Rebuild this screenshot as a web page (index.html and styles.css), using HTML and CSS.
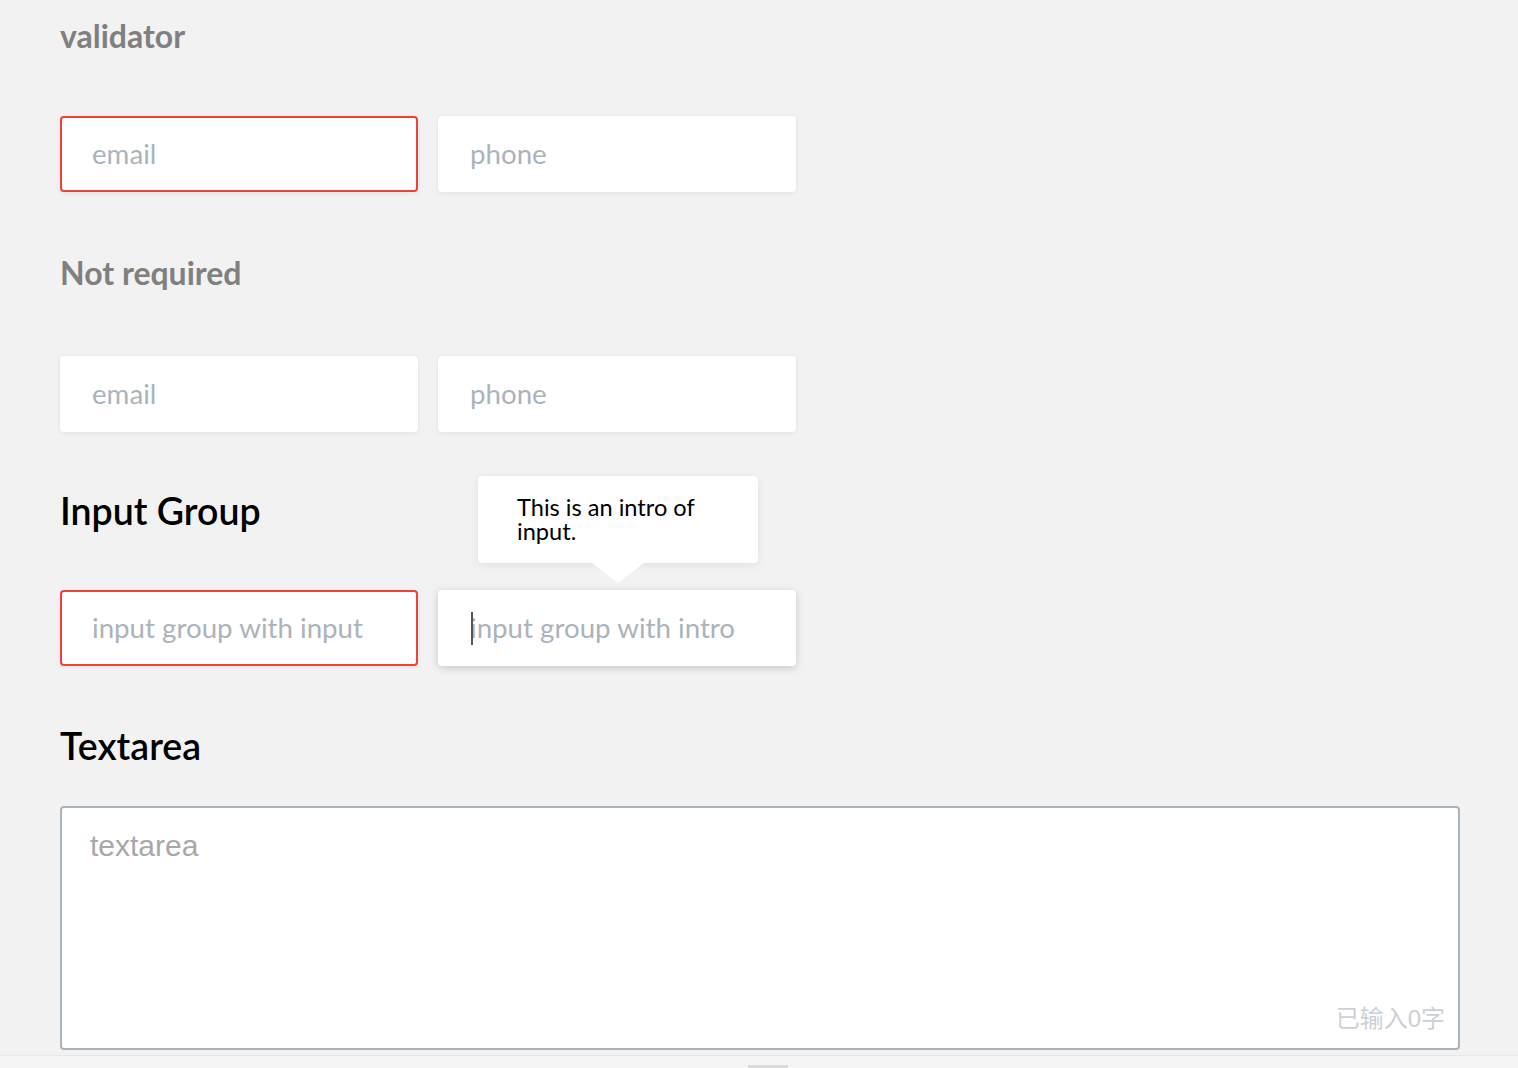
FILE: index.html
```html
<!DOCTYPE html>
<html>
<head>
<meta charset="utf-8">
<link rel="stylesheet" href="styles.css">
</head>
<body>
<main class="page">
  <h3 class="sub-title first">validator</h3>
  <div class="input-row">
    <div class="field invalid"><input class="text-input" placeholder="email"></div>
    <div class="field"><input class="text-input" placeholder="phone"></div>
  </div>

  <h3 class="sub-title second">Not required</h3>
  <div class="input-row">
    <div class="field"><input class="text-input" placeholder="email"></div>
    <div class="field"><input class="text-input" placeholder="phone"></div>
  </div>

  <h2 class="title group-title">Input Group</h2>
  <div class="input-row">
    <div class="field invalid"><input class="text-input" placeholder="input group with input"></div>
    <div class="field focused">
      <div class="tooltip">This is an intro of input.</div>
      <input class="text-input" placeholder="input group with intro">
      <span class="caret"></span>
    </div>
  </div>

  <h2 class="title area-title">Textarea</h2>
  <div class="textarea-box">
    <textarea class="textarea" placeholder="textarea"></textarea>
    <span class="counter">已输入0字</span>
  </div>
</main>
<footer class="bottom-bar"><span class="handle"></span></footer>
</body>
</html>
```

FILE: styles.css
```css
* { box-sizing: border-box; }
html, body { margin: 0; padding: 0; }
body {
  background: #f2f2f2;
  font-family: Lato, "Noto Sans", sans-serif;
  width: 1518px;
  height: 1068px;
  overflow: hidden;
}
.page {
  padding-left: 60px;
}
.sub-title {
  margin: 0;
  font-weight: 700;
  color: #808080;
  line-height: 1.2;
  font-size: 32px;
}
.sub-title.first { margin-top: 17px; margin-bottom: 60.6px; }
.sub-title.second { margin-top: 62.4px; margin-bottom: 63.2px; }
.title {
  margin: 0;
  font-weight: 600;
  color: #000;
  line-height: 1.2;
  font-size: 37.5px;
}
.group-title { margin-top: 56px; margin-bottom: 57px; }
.area-title { margin-top: 57px; margin-bottom: 38px; }

.input-row {
  display: flex;
  gap: 20px;
}
.field {
  position: relative;
  width: 358px;
  height: 76px;
  background: #fff;
  border: 2px solid transparent;
  border-radius: 4px;
  box-shadow: 0 1px 4px rgba(0,0,0,0.08);
}
.field.invalid { border-color: #f04134; }
.field.focused { box-shadow: 0 2px 8px rgba(0,0,0,0.18); }
.text-input {
  width: 100%;
  height: 100%;
  border: 0;
  outline: none;
  background: transparent;
  padding: 0 30px;
  font-family: Lato, sans-serif;
  font-size: 27.7px;
  color: #333;
}
.text-input::placeholder { color: #abb3bb; }
.caret {
  position: absolute;
  left: 31px;
  top: 20px;
  width: 2px;
  height: 33px;
  background: #555;
}
.tooltip {
  position: absolute;
  left: 38px;
  bottom: 100%;
  margin-bottom: 29px;
  width: 280px;
  padding: 19px 39px 20px;
  background: #fff;
  border-radius: 4px;
  box-shadow: 0 2px 8px rgba(0,0,0,0.08);
  font-size: 23.6px;
  line-height: 24px;
  color: #000;
}
.tooltip::after {
  content: "";
  position: absolute;
  left: 50%;
  top: 100%;
  margin-left: -26px;
  border-left: 26px solid transparent;
  border-right: 26px solid transparent;
  border-top: 20px solid #fff;
}
.textarea-box {
  position: relative;
  width: 1400px;
  height: 244px;
  background: #fff;
  border: 2px solid #aab4bd;
  border-radius: 4px;
}
.textarea {
  display: block;
  width: 100%;
  height: 100%;
  border: 0;
  outline: none;
  resize: none;
  background: transparent;
  padding: 21px 28px;
  font-family: "Liberation Sans", Arial, sans-serif;
  font-size: 30px;
  line-height: 34px;
}
.textarea::placeholder { color: #a8a8a8; }
.counter {
  position: absolute;
  right: 13px;
  bottom: 14px;
  font-family: "Liberation Sans", "Noto Sans CJK SC", sans-serif;
  font-size: 24px;
  color: #ccd0d5;
}
.bottom-bar {
  position: fixed;
  left: 0;
  right: 0;
  top: 1055px;
  bottom: 0;
  background: #f5f5f5;
  border-top: 1px solid #e8e8e8;
  display: flex;
  justify-content: flex-start;
  align-items: flex-end;
  padding-left: 748px;
}
.handle {
  display: block;
  width: 40px;
  height: 3px;
  background: #dcdcdc;
}
```
